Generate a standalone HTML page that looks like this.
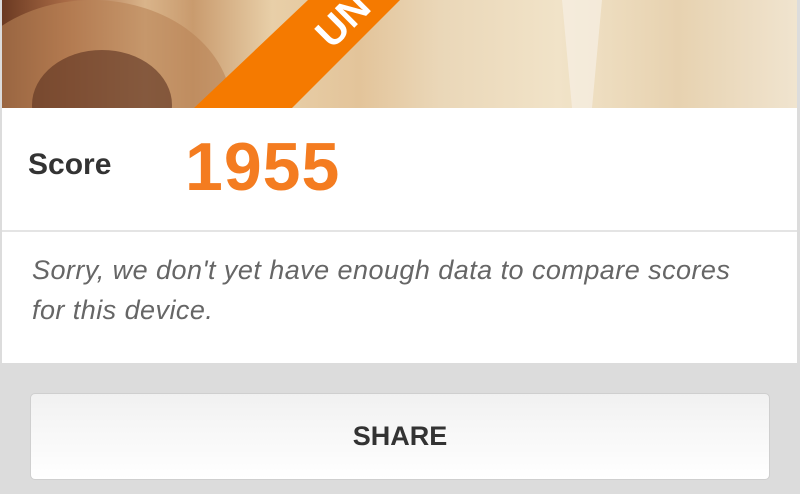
<!DOCTYPE html>
<html><head><style>
body{margin:0;width:800px;height:494px;background:#dcdcdc;overflow:hidden;font-family:"Liberation Sans",sans-serif;position:relative}
.card{position:absolute;left:2px;top:0;width:795px;height:363px;background:#fff}
.img{position:absolute;left:0;top:0;width:795px;height:108px;background:linear-gradient(90deg,#6b3a22 0%,#a86a45 8%,#d9b48a 18%,#c99b6e 24%,#e8cfa8 34%,#e3c49a 45%,#ead7b8 55%,#f1e3c8 70%,#e7d2b0 85%,#f0e4cf 100%);overflow:hidden}
.sc{position:absolute;top:108px;left:0;width:795px;height:122px;border-bottom:2px solid #e4e4e4}
.lbl{position:absolute;left:26px;top:40px;font-size:30px;font-weight:bold;color:#333}
.num{position:absolute;left:183px;top:20px;font-size:68px;font-weight:bold;color:#f47c20;letter-spacing:1px}
.msg{position:absolute;left:30px;top:250px;font-size:27px;font-style:italic;color:#666;line-height:40px;letter-spacing:0.45px}
.btn{position:absolute;left:30px;top:393px;width:738px;height:85px;border:1px solid #cfcfcf;border-radius:5px;background:linear-gradient(#f1f1f1,#fff);text-align:center;line-height:85px;font-size:27px;font-weight:bold;color:#333}
</style></head><body>
<div class="card">
<div class="img">
<svg width="795" height="108" style="position:absolute;left:0;top:0">
<ellipse cx="90" cy="110" rx="140" ry="110" fill="#b98357" opacity=".6"/>
<ellipse cx="100" cy="105" rx="70" ry="55" fill="#5a3020" opacity=".6"/>
<polygon points="560,0 600,0 590,108 570,108" fill="#f6efe4" opacity=".7"/>
<polygon points="192,108 290,108 398,0 306,0" fill="#f57a00"/>
<text x="330" y="50" fill="#fff" font-size="40" font-weight="bold" transform="rotate(-45 330 50)">UN</text>
</svg>
</div>
<div class="sc"><div class="lbl">Score</div><div class="num">1955</div></div>
<div class="msg">Sorry, we don't yet have enough data to compare scores<br>for this device.</div>
</div>
<div class="btn">SHARE</div>
</body></html>
